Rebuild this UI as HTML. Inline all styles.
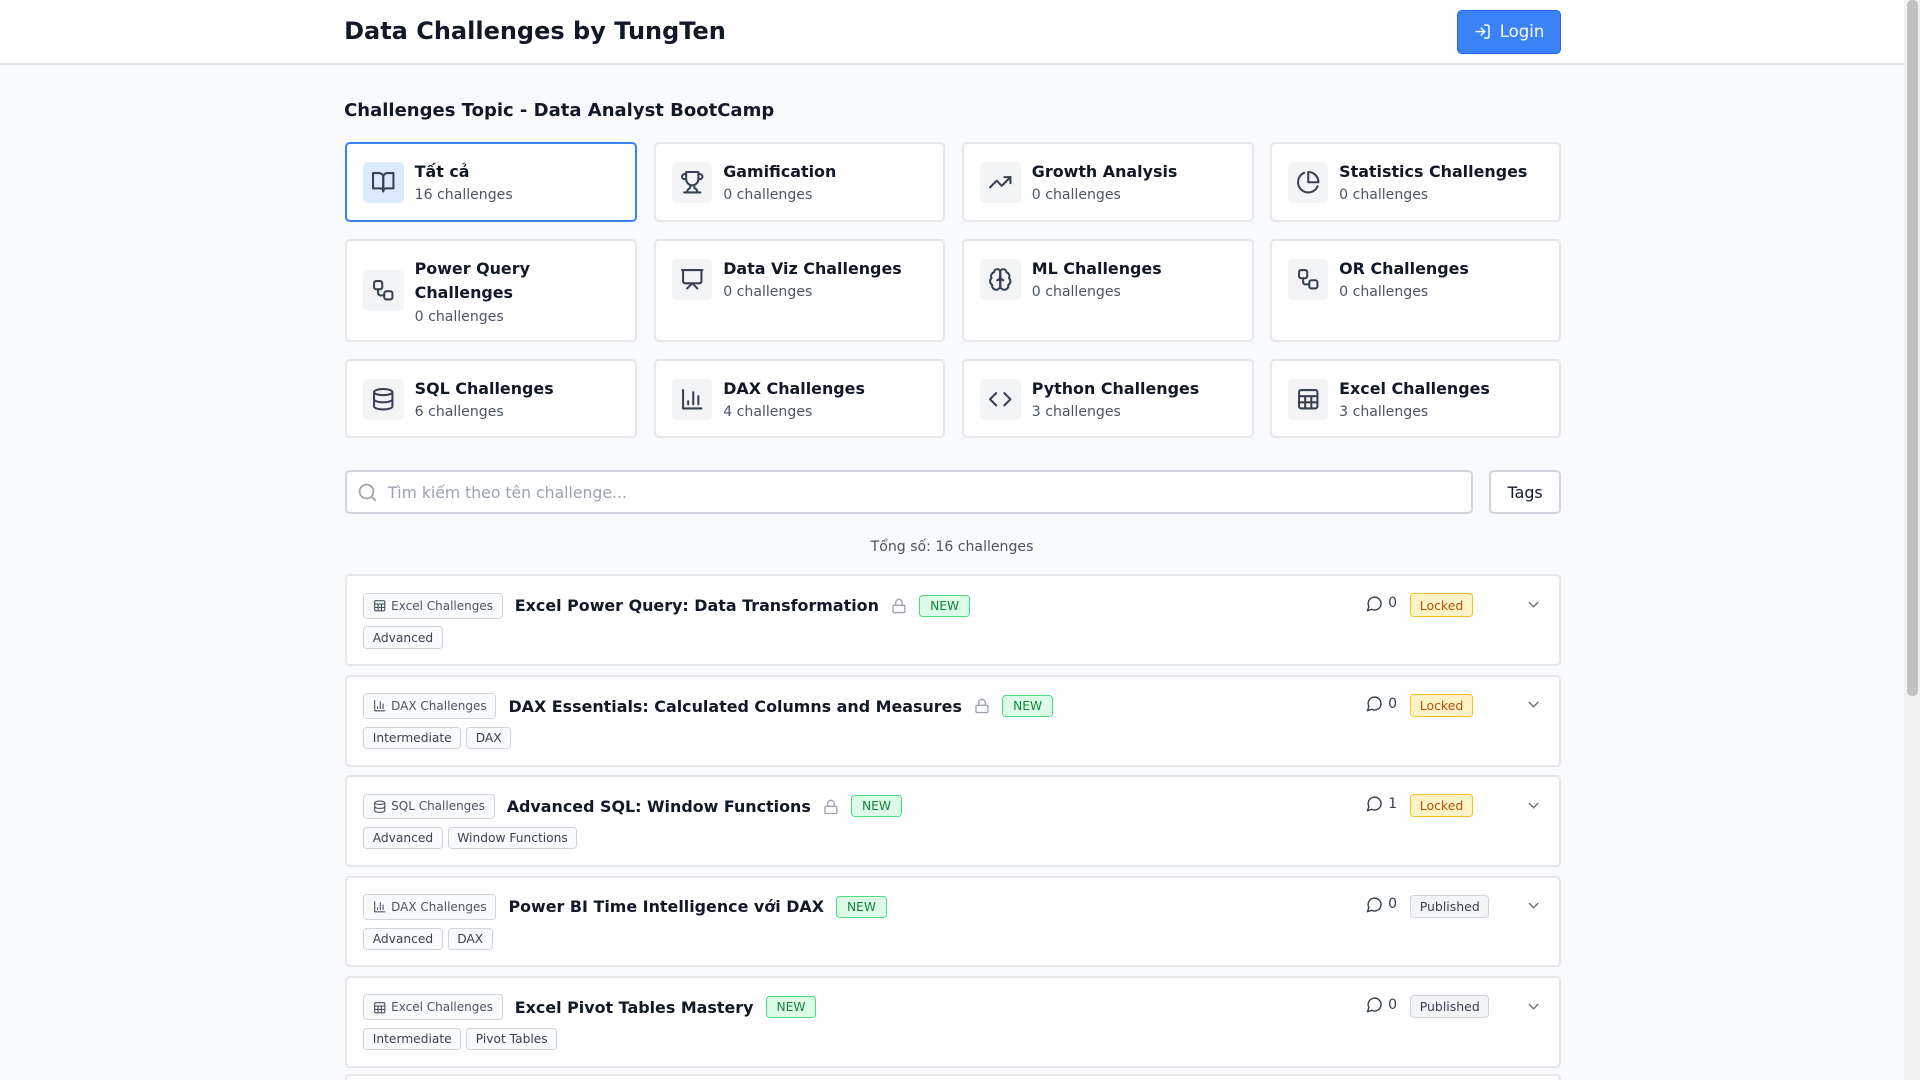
<!DOCTYPE html>
<html><head><meta charset="utf-8"><style>
html{zoom:1.2245;overflow:hidden;height:882px}
*{box-sizing:border-box;margin:0;padding:0}
body{width:1568px;height:882px;overflow:hidden;background:#f9fafb;font-family:"DejaVu Sans","Liberation Sans",sans-serif;color:#111827;position:relative}
.hdr{position:absolute;left:0;top:0;width:1555px;height:53px;background:#fff;border-bottom:2px solid #e5e7eb}
.hdr h1{position:absolute;left:281px;top:14px;font-size:19.6px;font-weight:bold}
.login{position:absolute;left:1190px;top:8px;width:85px;height:36px;background:#3b82f6;border:1px solid #2563eb;border-radius:4px;color:#fff;font-size:13.5px;display:flex;align-items:center;justify-content:center;gap:7px}
h2{position:absolute;left:281px;top:82px;font-size:14.7px;font-weight:bold}
.card{position:absolute;width:238px;background:#fff;border:2px solid #e5e7eb;border-radius:4px}
.card.sel{border-color:#3b82f6}
.ic{position:absolute;left:13px;width:33px;height:33px;background:#f3f4f6;border-radius:4px;display:flex;align-items:center;justify-content:center}
.sel .ic{background:#dbeafe}
.ct{position:absolute;left:55px;top:13px;right:8px}
.ct b{display:block;font-size:13px;line-height:20px}
.ct span{display:block;font-size:11.5px;color:#4b5563;line-height:18px}
svg{fill:none;stroke:#374151;stroke-width:2;stroke-linecap:round;stroke-linejoin:round}
.search{position:absolute;left:282px;top:384px;width:921px;height:36px;background:#fff;border:2px solid #d1d5db;border-radius:4px}
.search span{position:absolute;left:33px;top:9px;font-size:12.8px;color:#9ca3af}
.tags{position:absolute;left:1216px;top:384px;width:59px;height:36px;background:#fff;border:2px solid #d1d5db;border-radius:4px;font-size:13px;display:flex;align-items:center;justify-content:center}
.total{position:absolute;left:0;width:1555px;top:440px;text-align:center;font-size:11.5px;color:#4b5563}
.row{position:absolute;left:282px;width:993px;height:75px;background:#fff;border:2px solid #e5e7eb;border-radius:4px}
.l1{position:absolute;left:13px;top:13px;display:flex;align-items:center;gap:10px;height:22px}
.chip{border:1px solid #d1d5db;background:#f9fafb;border-radius:3px;font-size:9.8px;color:#4b5563;height:21px;padding:0 7px;display:flex;align-items:center;gap:4px}
.t{font-size:13px;font-weight:bold}
.new{border:1px solid #4ade80;background:#dcfce7;color:#15803d;font-size:10px;border-radius:3px;height:18px;padding:0 8px;display:flex;align-items:center}
.l2{position:absolute;left:13px;top:41px;display:flex;gap:4px}
.l2 .chip{height:18px;color:#374151;font-size:10px}
.cm{position:absolute;left:832px;top:15px;font-size:11.5px;color:#374151;display:flex;align-items:center;gap:4px}
.st{position:absolute;left:868px;top:14px;height:19px;border-radius:3px;font-size:10.2px;padding:0 7px;display:flex;align-items:center}
.lk{background:#fef3c7;border:1px solid #fbbf24;color:#b45309}
.pb{background:#f3f4f6;border:1px solid #d1d5db;color:#374151}
.cv{position:absolute;left:962px;top:16px}
.sb{position:absolute;left:1555px;top:0;width:13px;height:882px;background:#f1f1f1}
.sb div{position:absolute;left:2px;top:0;width:9px;height:568px;background:#c1c1c1;border-radius:4px}
</style></head><body>
<div class="hdr"><h1>Data Challenges by TungTen</h1>
<div class="login"><svg width="14" height="14" viewBox="0 0 24 24" style="stroke:#fff"><path d="M15 3h4a2 2 0 0 1 2 2v14a2 2 0 0 1-2 2h-4"/><path d="M10 17l5-5-5-5"/><path d="M15 12H3"/></svg>Login</div></div>
<h2>Challenges Topic - Data Analyst BootCamp</h2>

<div class="card sel" style="left:282px;top:116px;height:65px"><div class="ic" style="top:15px"><svg width="20" height="20" viewBox="0 0 24 24"><path d="M2 3h6a4 4 0 0 1 4 4v14a3 3 0 0 0-3-3H2z"/><path d="M22 3h-6a4 4 0 0 0-4 4v14a3 3 0 0 1 3-3h7z"/></svg></div><div class="ct"><b>Tất cả</b><span>16 challenges</span></div></div>
<div class="card" style="left:534px;top:116px;height:65px"><div class="ic" style="top:15px"><svg width="20" height="20" viewBox="0 0 24 24"><path d="M6 9H4.5a2.5 2.5 0 0 1 0-5H6"/><path d="M18 9h1.5a2.5 2.5 0 0 0 0-5H18"/><path d="M4 22h16"/><path d="M10 14.7V17c0 .6-.5 1-1 1.2C7.9 18.8 7 20.2 7 22"/><path d="M14 14.7V17c0 .6.5 1 1 1.2 1.1.6 2 2 2 3.8"/><path d="M18 2H6v7a6 6 0 0 0 12 0V2z"/></svg></div><div class="ct"><b>Gamification</b><span>0 challenges</span></div></div>
<div class="card" style="left:786px;top:116px;height:65px"><div class="ic" style="top:15px"><svg width="20" height="20" viewBox="0 0 24 24"><path d="M22 7l-8.5 8.5-5-5L2 17"/><path d="M16 7h6v6"/></svg></div><div class="ct"><b>Growth Analysis</b><span>0 challenges</span></div></div>
<div class="card" style="left:1037px;top:116px;height:65px"><div class="ic" style="top:15px"><svg width="20" height="20" viewBox="0 0 24 24"><path d="M21.2 15.9A10 10 0 1 1 8 2.8"/><path d="M22 12A10 10 0 0 0 12 2v10z"/></svg></div><div class="ct"><b>Statistics Challenges</b><span>0 challenges</span></div></div>

<div class="card" style="left:282px;top:195px;height:84px"><div class="ic" style="top:24px"><svg width="20" height="20" viewBox="0 0 24 24"><rect x="3" y="3" width="8" height="8" rx="2"/><path d="M7 11v4a2 2 0 0 0 2 2h4"/><rect x="13" y="13" width="8" height="8" rx="2"/></svg></div><div class="ct"><b>Power Query Challenges</b><span>0 challenges</span></div></div>
<div class="card" style="left:534px;top:195px;height:84px"><div class="ic" style="top:15px"><svg width="20" height="20" viewBox="0 0 24 24"><path d="M2 3h20"/><path d="M21 3v11a2 2 0 0 1-2 2H5a2 2 0 0 1-2-2V3"/><path d="M7 21l5-5 5 5"/></svg></div><div class="ct"><b>Data Viz Challenges</b><span>0 challenges</span></div></div>
<div class="card" style="left:786px;top:195px;height:84px"><div class="ic" style="top:15px"><svg width="20" height="20" viewBox="0 0 24 24"><path d="M12 5a3 3 0 1 0-6 .1 4 4 0 0 0-2.5 5.8 4 4 0 0 0 .6 6.6A4 4 0 1 0 12 18z"/><path d="M12 5a3 3 0 1 1 6 .1 4 4 0 0 1 2.5 5.8 4 4 0 0 1-.6 6.6A4 4 0 1 1 12 18z"/><path d="M12 5v13"/><path d="M9 13a4.5 4.5 0 0 0 3-4M15 13a4.5 4.5 0 0 1-3-4"/></svg></div><div class="ct"><b>ML Challenges</b><span>0 challenges</span></div></div>
<div class="card" style="left:1037px;top:195px;height:84px"><div class="ic" style="top:15px"><svg width="20" height="20" viewBox="0 0 24 24"><rect x="3" y="3" width="8" height="8" rx="2"/><path d="M7 11v4a2 2 0 0 0 2 2h4"/><rect x="13" y="13" width="8" height="8" rx="2"/></svg></div><div class="ct"><b>OR Challenges</b><span>0 challenges</span></div></div>

<div class="card" style="left:282px;top:293px;height:65px"><div class="ic" style="top:15px"><svg width="20" height="20" viewBox="0 0 24 24"><ellipse cx="12" cy="5" rx="9" ry="3"/><path d="M3 5v14a9 3 0 0 0 18 0V5"/><path d="M3 12a9 3 0 0 0 18 0"/></svg></div><div class="ct"><b>SQL Challenges</b><span>6 challenges</span></div></div>
<div class="card" style="left:534px;top:293px;height:65px"><div class="ic" style="top:15px"><svg width="20" height="20" viewBox="0 0 24 24"><path d="M3 3v18h18"/><path d="M18 17V9M13 17V5M8 17v-3"/></svg></div><div class="ct"><b>DAX Challenges</b><span>4 challenges</span></div></div>
<div class="card" style="left:786px;top:293px;height:65px"><div class="ic" style="top:15px"><svg width="20" height="20" viewBox="0 0 24 24"><path d="M16 18l6-6-6-6"/><path d="M8 6l-6 6 6 6"/></svg></div><div class="ct"><b>Python Challenges</b><span>3 challenges</span></div></div>
<div class="card" style="left:1037px;top:293px;height:65px"><div class="ic" style="top:15px"><svg width="20" height="20" viewBox="0 0 24 24"><rect x="3" y="3" width="18" height="18" rx="2"/><path d="M3 9h18M3 15h18M9 9v12M15 9v12"/></svg></div><div class="ct"><b>Excel Challenges</b><span>3 challenges</span></div></div>

<div class="search"><svg width="17" height="17" viewBox="0 0 24 24" style="position:absolute;left:8px;top:8px;stroke:#9ca3af"><circle cx="11" cy="11" r="8"/><path d="M21 21l-4.3-4.3"/></svg><span>Tìm kiếm theo tên challenge...</span></div>
<div class="tags">Tags</div>
<div class="total">Tổng số: 16 challenges</div>

<div class="row" style="top:469px"><div class="l1"><div class="chip"><svg width="11" height="11" viewBox="0 0 24 24" style="stroke:#4b5563"><rect x="3" y="3" width="18" height="18" rx="2"/><path d="M3 9h18M3 15h18M9 9v12M15 9v12"/></svg>Excel Challenges</div><span class="t">Excel Power Query: Data Transformation</span><svg width="13" height="13" viewBox="0 0 24 24" style="stroke:#9ca3af"><rect x="3" y="11" width="18" height="11" rx="2"/><path d="M7 11V7a5 5 0 0 1 10 0v4"/></svg><span class="new">NEW</span></div>
<div class="l2"><span class="chip">Advanced</span></div>
<div class="cm"><svg width="14" height="14" viewBox="0 0 24 24"><path d="M7.9 20A9 9 0 1 0 4 16.1L2 22z"/></svg>0</div><div class="st lk">Locked</div><svg class="cv" width="14" height="14" viewBox="0 0 24 24" style="stroke:#6b7280"><path d="M6 9l6 6 6-6"/></svg></div>

<div class="row" style="top:551px"><div class="l1"><div class="chip"><svg width="11" height="11" viewBox="0 0 24 24" style="stroke:#4b5563"><path d="M3 3v18h18"/><path d="M18 17V9M13 17V5M8 17v-3"/></svg>DAX Challenges</div><span class="t">DAX Essentials: Calculated Columns and Measures</span><svg width="13" height="13" viewBox="0 0 24 24" style="stroke:#9ca3af"><rect x="3" y="11" width="18" height="11" rx="2"/><path d="M7 11V7a5 5 0 0 1 10 0v4"/></svg><span class="new">NEW</span></div>
<div class="l2"><span class="chip">Intermediate</span><span class="chip">DAX</span></div>
<div class="cm"><svg width="14" height="14" viewBox="0 0 24 24"><path d="M7.9 20A9 9 0 1 0 4 16.1L2 22z"/></svg>0</div><div class="st lk">Locked</div><svg class="cv" width="14" height="14" viewBox="0 0 24 24" style="stroke:#6b7280"><path d="M6 9l6 6 6-6"/></svg></div>

<div class="row" style="top:633px"><div class="l1"><div class="chip"><svg width="11" height="11" viewBox="0 0 24 24" style="stroke:#4b5563"><ellipse cx="12" cy="5" rx="9" ry="3"/><path d="M3 5v14a9 3 0 0 0 18 0V5"/><path d="M3 12a9 3 0 0 0 18 0"/></svg>SQL Challenges</div><span class="t">Advanced SQL: Window Functions</span><svg width="13" height="13" viewBox="0 0 24 24" style="stroke:#9ca3af"><rect x="3" y="11" width="18" height="11" rx="2"/><path d="M7 11V7a5 5 0 0 1 10 0v4"/></svg><span class="new">NEW</span></div>
<div class="l2"><span class="chip">Advanced</span><span class="chip">Window Functions</span></div>
<div class="cm"><svg width="14" height="14" viewBox="0 0 24 24"><path d="M7.9 20A9 9 0 1 0 4 16.1L2 22z"/></svg>1</div><div class="st lk">Locked</div><svg class="cv" width="14" height="14" viewBox="0 0 24 24" style="stroke:#6b7280"><path d="M6 9l6 6 6-6"/></svg></div>

<div class="row" style="top:715px"><div class="l1"><div class="chip"><svg width="11" height="11" viewBox="0 0 24 24" style="stroke:#4b5563"><path d="M3 3v18h18"/><path d="M18 17V9M13 17V5M8 17v-3"/></svg>DAX Challenges</div><span class="t">Power BI Time Intelligence với DAX</span><span class="new">NEW</span></div>
<div class="l2"><span class="chip">Advanced</span><span class="chip">DAX</span></div>
<div class="cm"><svg width="14" height="14" viewBox="0 0 24 24"><path d="M7.9 20A9 9 0 1 0 4 16.1L2 22z"/></svg>0</div><div class="st pb">Published</div><svg class="cv" width="14" height="14" viewBox="0 0 24 24" style="stroke:#6b7280"><path d="M6 9l6 6 6-6"/></svg></div>

<div class="row" style="top:797px"><div class="l1"><div class="chip"><svg width="11" height="11" viewBox="0 0 24 24" style="stroke:#4b5563"><rect x="3" y="3" width="18" height="18" rx="2"/><path d="M3 9h18M3 15h18M9 9v12M15 9v12"/></svg>Excel Challenges</div><span class="t">Excel Pivot Tables Mastery</span><span class="new">NEW</span></div>
<div class="l2"><span class="chip">Intermediate</span><span class="chip">Pivot Tables</span></div>
<div class="cm"><svg width="14" height="14" viewBox="0 0 24 24"><path d="M7.9 20A9 9 0 1 0 4 16.1L2 22z"/></svg>0</div><div class="st pb">Published</div><svg class="cv" width="14" height="14" viewBox="0 0 24 24" style="stroke:#6b7280"><path d="M6 9l6 6 6-6"/></svg></div>

<div class="row" style="top:877px;height:5px;border-bottom:none;border-radius:4px 4px 0 0"></div>
<div class="sb"><div></div></div>
</body></html>
